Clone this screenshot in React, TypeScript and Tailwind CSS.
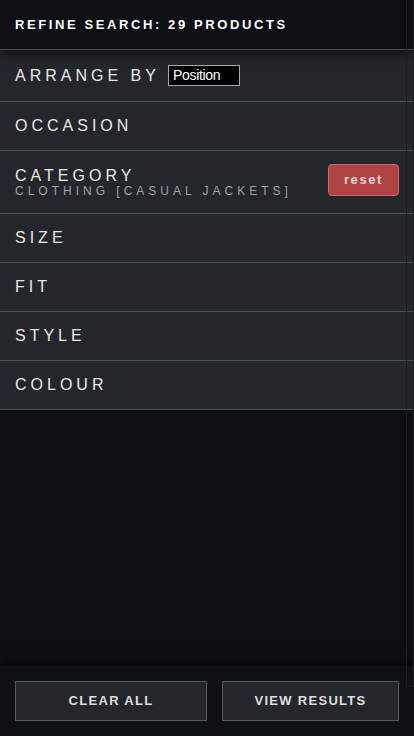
export default function App() {
  const rows = ['OCCASION'];
  const rest = ['SIZE', 'FIT', 'STYLE', 'COLOUR'];

  return (
    <div
      className="relative flex h-[736px] w-[414px] flex-col overflow-hidden bg-[#0c1014] text-[#e8e8e8]"
      style={{ fontFamily: '"Liberation Sans", Arial, sans-serif' }}
    >
      {/* header */}
      <div className="relative z-10 flex h-[50px] shrink-0 items-center border-b border-[#4b5054] bg-[#0c1014] px-[15px] shadow-[0_4px_10px_rgba(0,0,0,0.55)]">
        <h1 className="text-[13px] font-bold tracking-[2.6px] text-white">REFINE SEARCH: 29 PRODUCTS</h1>
      </div>

      {/* filter list */}
      <div className="flex flex-col bg-[#23272b]">
        <div className="flex h-[52px] items-center border-b border-[#4b5054] px-[15px]">
          <span className="text-[16px] tracking-[4px]">ARRANGE BY</span>
          <div className="ml-[8px] flex h-[21px] w-[72px] items-center border border-[#a9a9a9] bg-black px-[4px] text-[14px] tracking-[-0.3px] text-white">
            Position
          </div>
        </div>

        {rows.map((r) => (
          <div key={r} className="flex h-[49px] items-center border-b border-[#4b5054] px-[15px]">
            <span className="text-[16px] tracking-[4px]">{r}</span>
          </div>
        ))}

        <div className="flex h-[63px] items-center justify-between border-b border-[#4b5054] pl-[15px] pr-[15px]">
          <div className="flex flex-col pt-[1px]">
            <span className="text-[16px] leading-[17px] tracking-[4px]">CATEGORY</span>
            <span className="text-[12px] leading-[14px] tracking-[4px] text-[#9ba1a6]">CLOTHING [CASUAL JACKETS]</span>
          </div>
          <button className="mb-[4px] flex h-[32px] w-[71px] items-center justify-center rounded-[4px] border border-[#d06a6a] bg-[#b04343] text-[13px] font-bold tracking-[1.6px] text-[#f3d6d6]">
            reset
          </button>
        </div>

        {rest.map((r) => (
          <div key={r} className="flex h-[49px] items-center border-b border-[#4b5054] px-[15px]">
            <span className="text-[16px] tracking-[4px]">{r}</span>
          </div>
        ))}
      </div>

      <div className="flex-1" />

      {/* footer */}
      <div className="relative z-10 flex h-[70px] shrink-0 items-center gap-[15px] bg-[#0d1115] px-[15px] shadow-[0_-4px_10px_rgba(0,0,0,0.55)]">
        <button className="flex h-[40px] w-[192px] items-center justify-center border border-[#575c60] bg-[#23272b] text-[13px] font-bold tracking-[1.3px] text-[#dedede]">
          CLEAR ALL
        </button>
        <button className="flex h-[40px] w-[177px] items-center justify-center border border-[#575c60] bg-[#23272b] text-[13px] font-bold tracking-[1.3px] text-[#dedede]">
          VIEW RESULTS
        </button>
      </div>

      {/* faint scrollbar track */}
      <div className="absolute right-0 top-0 z-20 h-[687px] w-[8px] border-x border-b border-[#1a1e22]" />
    </div>
  );
}
